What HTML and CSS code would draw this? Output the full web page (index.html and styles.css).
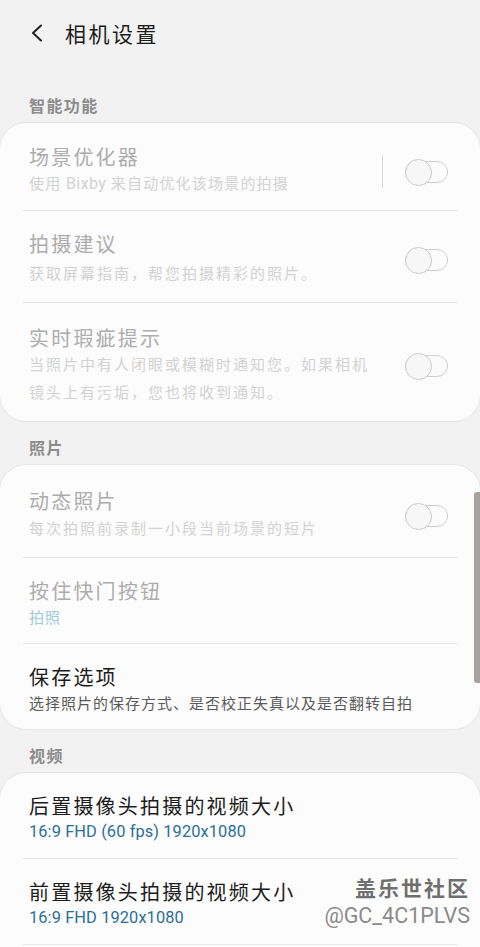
FILE: index.html
```html
<!DOCTYPE html>
<html lang="zh-CN">
<head>
<meta charset="utf-8">
<title>相机设置</title>
<link rel="stylesheet" href="styles.css">
</head>
<body>
<div class="screen">
  <header class="topbar">
    <svg class="back" width="14" height="18" viewBox="0 0 14 18"><polyline points="11,1.5 3,9 11,16.5" fill="none" stroke="#222" stroke-width="2" stroke-linecap="round" stroke-linejoin="round"/></svg>
    <h1 class="page-title">相机设置</h1>
  </header>

  <div class="section-label first">智能功能</div>
  <section class="card">
    <div class="row row-first">
      <div class="text">
        <div class="title disabled">场景优化器</div>
        <div class="sub disabled tight">使用 <span class="latin">Bixby</span> 来自动优化该场景的拍摄</div>
      </div>
      <div class="vsep"></div>
      <div class="switch"></div>
    </div>
    <div class="divider"></div>
    <div class="row row-loose">
      <div class="text">
        <div class="title disabled">拍摄建议</div>
        <div class="sub disabled">获取屏幕指南，帮您拍摄精彩的照片。</div>
      </div>
      <div class="switch"></div>
    </div>
    <div class="divider"></div>
    <div class="row row-multi">
      <div class="text">
        <div class="title disabled">实时瑕疵提示</div>
        <div class="sub disabled">当照片中有人闭眼或模糊时通知您。如果相机镜头上有污垢，您也将收到通知。</div>
      </div>
      <div class="switch"></div>
    </div>
  </section>

  <div class="section-label">照片</div>
  <section class="card">
    <div class="row row-photo">
      <div class="text">
        <div class="title disabled">动态照片</div>
        <div class="sub disabled">每次拍照前录制一小段当前场景的短片</div>
      </div>
      <div class="switch"></div>
    </div>
    <div class="divider"></div>
    <div class="row">
      <div class="text full">
        <div class="title disabled">按住快门按钮</div>
        <div class="sub value-disabled">拍照</div>
      </div>
    </div>
    <div class="divider"></div>
    <div class="row">
      <div class="text full">
        <div class="title">保存选项</div>
        <div class="sub">选择照片的保存方式、是否校正失真以及是否翻转自拍</div>
      </div>
    </div>
  </section>

  <div class="section-label">视频</div>
  <section class="card card-last">
    <div class="row">
      <div class="text full">
        <div class="title">后置摄像头拍摄的视频大小</div>
        <div class="sub value">16:9 FHD (60 fps) 1920x1080</div>
      </div>
    </div>
    <div class="divider"></div>
    <div class="row">
      <div class="text full">
        <div class="title">前置摄像头拍摄的视频大小</div>
        <div class="sub value">16:9 FHD 1920x1080</div>
      </div>
    </div>
    <div class="divider"></div>
  </section>

  <div class="scrollbar"></div>
  <div class="watermark">
    <div class="wm-name">盖乐世社区</div>
    <div class="wm-user">@GC_4C1PLVS</div>
  </div>
</div>
</body>
</html>
```
FILE: styles.css
```css
* { box-sizing: border-box; }
html, body {
  margin: 0;
  padding: 0;
  background: #f2f2f2;
}
body {
  font-family: "Noto Sans CJK SC", "Noto Sans", sans-serif;
  width: 480px;
  height: 947px;
  overflow: hidden;
}
.screen {
  position: relative;
  width: 480px;
  height: 947px;
  overflow: hidden;
}
.topbar {
  height: 66px;
  display: flex;
  align-items: center;
  padding-left: 30px;
}
.back {
  display: block;
  margin-right: 21px;
}
.page-title {
  margin: 0;
  font-size: 21px;
  font-weight: 400;
  letter-spacing: 2.5px;
  color: #1c1c1c;
  line-height: 30px;
}
.section-label {
  padding: 16px 29px 8px;
  font-size: 16px;
  line-height: 20px;
  font-weight: 700;
  letter-spacing: 1.4px;
  color: #8c8c8c;
}
.section-label.first {
  padding-top: 29px;
}
.card {
  background: #fcfcfc;
  border-radius: 26px;
  box-shadow: 0 0 0 1px #e6e6e6;
}
.card-last {
  padding-bottom: 60px;
}
.row {
  display: flex;
  align-items: center;
  padding: 21px 32px 12px 29px;
}
.row-first { padding-top: 22px; padding-bottom: 12px; }
.row-loose { padding-top: 21px; padding-bottom: 15px; }
.row-loose .sub { margin-top: 3px; }
.row-multi { padding-top: 23px; padding-bottom: 15px; }
.row-photo { padding-top: 24px; padding-bottom: 15px; }
.row-photo .sub { margin-top: 1px; }
.text {
  flex: 1;
  min-width: 0;
  padding-right: 24px;
}
.text.full { padding-right: 0; }
.row-first .text { padding-right: 0; }
.title {
  font-size: 20px;
  line-height: 24px;
  letter-spacing: 2.2px;
  color: #1c1c1c;
  white-space: nowrap;
}
.sub {
  font-size: 15px;
  line-height: 28px;
  letter-spacing: 1px;
  color: #5a5a5a;
}
.title.disabled { color: #acacac; }
.sub.disabled { color: #d2d2d2; letter-spacing: 2px; }
.sub.disabled.tight { letter-spacing: 1.2px; }
.latin {
  font-family: "Roboto", sans-serif;
  font-size: 16px;
  letter-spacing: 0.4px;
}
.sub.value-disabled { color: #9fcad9; }
.sub.value {
  font-family: "Roboto", "Noto Sans CJK SC", sans-serif;
  font-size: 16.4px;
  letter-spacing: 0.1px;
  color: #2b6f98;
}
.divider {
  height: 1px;
  margin: 0 23px;
  background: #e8e8e8;
}
.vsep {
  width: 1px;
  height: 33px;
  background: #d9d9d9;
  margin-right: 22px;
}
.switch {
  position: relative;
  flex: none;
  width: 43px;
  height: 22px;
  border: 1.5px solid #cfcfcf;
  border-radius: 11px;
  background: #fbfbfb;
}
.switch::before {
  content: "";
  position: absolute;
  left: -1.5px;
  top: -3px;
  width: 25px;
  height: 25px;
  border: 1.5px solid #c9c9c9;
  border-radius: 50%;
  background: #f7f7f7;
}
.scrollbar {
  position: absolute;
  right: 0;
  top: 492px;
  width: 6px;
  height: 191px;
  border-radius: 3px 0 0 3px;
  background: #a9a19e;
}
.watermark {
  position: absolute;
  right: 10px;
  top: 873px;
  text-align: right;
}
.wm-name {
  font-size: 21px;
  line-height: 28px;
  font-weight: 700;
  letter-spacing: 2px;
  color: #6f6f6f;
  text-shadow: 0 0 2px #fff;
}
.wm-user {
  font-family: "Roboto", "Noto Sans", sans-serif;
  font-size: 21.5px;
  line-height: 30px;
  color: #8a8a8a;
  text-shadow: 0 0 2px #fff;
}
```
